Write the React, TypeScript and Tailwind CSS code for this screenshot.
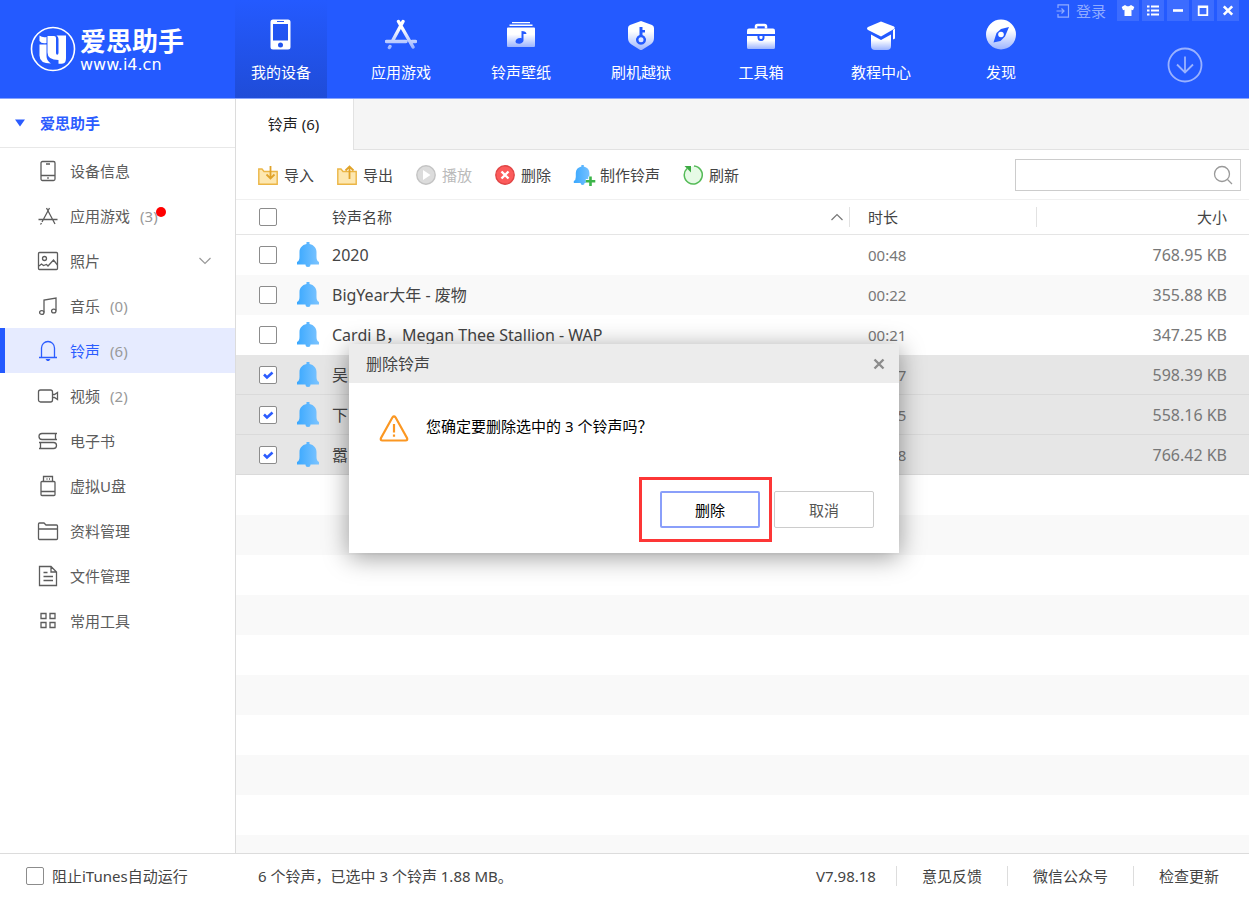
import React, { useState } from 'react';
import clsx from 'clsx';

type IconProps = { className?: string };

/* ---------- header icons ---------- */

const Fade = ({ id }: { id: string }) => (
  <defs>
    <linearGradient id={id} x1="0" y1="0" x2="0" y2="1">
      <stop offset="0.35" stopColor="#fff" />
      <stop offset="1" stopColor="#fff" stopOpacity="0.55" />
    </linearGradient>
  </defs>
);

const PhoneIcon = () => (
  <svg viewBox="0 0 32 32" className="w-8 h-8">
    <path
      fillRule="evenodd"
      fill="#fff"
      d="M8 1.500h15a2.500 2.500 0 0 1 2.500 2.500v25a2.500 2.500 0 0 1-2.500 2.500h-15a2.500 2.500 0 0 1-2.500-2.500v-25a2.500 2.500 0 0 1 2.500-2.500zM8 6v16.500h15V6zM12 3v1h7V3zM15.500 24.500a2.500 2.500 0 1 0 0 5 2.500 2.500 0 0 0 0-5z"
    />
  </svg>
);

const AppsIcon = () => (
  <svg viewBox="0 0 32 32" className="w-8 h-8" fill="none" strokeLinecap="round">
    <defs>
      <linearGradient id="apps" gradientUnits="userSpaceOnUse" x1="0" y1="2" x2="0" y2="30">
        <stop offset="0.3" stopColor="#fff" />
        <stop offset="1" stopColor="#fff" stopOpacity="0.55" />
      </linearGradient>
    </defs>
    <g stroke="url(#apps)" strokeWidth="3.400">
      <path d="M18 3.500L8 22M13.500 3.500l14.500 25.500M1.500 23.500h19.500M27 23.500h3.500M5 28.500l-.6 1" />
    </g>
  </svg>
);

const RingWallIcon = () => (
  <svg viewBox="0 0 32 32" className="w-8 h-8">
    <Fade id="wall" />
    <path fill="#fff" d="M7 4h18v1.300H7zM4.500 6.500h23v1.500h-23z" />
    <path
      fillRule="evenodd"
      fill="url(#wall)"
      d="M3 9.500h26a1 1 0 0 1 1 1V28a1 1 0 0 1-1 1H3a1 1 0 0 1-1-1V10.500a1 1 0 0 1 1-1zM16.500 13v7.200c-3-.8-6 1-6 3.300 0 3.200 8 3.200 8-1.500v-6h3c0-2-2-3-5-3z"
    />
  </svg>
);

const ShieldKeyIcon = () => (
  <svg viewBox="0 0 32 32" className="w-8 h-8">
    <Fade id="shield" />
    <path
      fillRule="evenodd"
      fill="url(#shield)"
      d="M16 3l11 4q2 .8 2 3v10q0 4-3.500 6.500L16 32.500 6.500 26.500Q3 24 3 20V10q0-2.200 2-3zM14.500 9v8a5 5 0 1 0 3 0v-2.500h2.500v-2.500h-2.500V9z"
    />
    <circle cx="16" cy="21.700" r="2.500" fill="#dfe6ff" />
  </svg>
);

const ToolboxIcon = () => (
  <svg viewBox="0 0 32 32" className="w-8 h-8">
    <Fade id="toolbox" />
    <path fill="none" stroke="#fff" strokeWidth="2.500" d="M11 10.500V8.500q0-1.500 1.500-1.500h7q1.500 0 1.500 1.500v2" />
    <path fill="#fff" d="M4 10.500h24q2 0 2 2v3.500H2v-3.500q0-2 2-2z" />
    <path
      fillRule="evenodd"
      fill="url(#toolbox)"
      d="M2 18h10.500v1.500a3.500 3.500 0 0 0 7 0V18H30v11.500q0 1.500-1.500 1.500h-25Q2 31 2 29.500z"
    />
    <path fill="#fff" d="M14.500 18h3v1.500a1.500 1.500 0 0 1-3 0z" />
  </svg>
);

const CapIcon = () => (
  <svg viewBox="0 0 32 32" className="w-8 h-8">
    <Fade id="cap" />
    <path fill="#fff" d="M16 3.500l13 5q1.500 1 0 2.500L16 18.500 3 12Q1 10.500 3 9z" />
    <path fill="url(#cap)" d="M6 16.500l10 5.500 10-5.500v11.500q0 4-4 4H10q-4 0-4-4z" />
    <path fill="#fff" d="M28 12l2-1.500V20.500l-2 1z" />
  </svg>
);

const CompassIcon = () => (
  <svg viewBox="0 0 32 32" className="w-8 h-8">
    <Fade id="compass" />
    <path
      fillRule="evenodd"
      fill="url(#compass)"
      d="M16 1.500a15 15 0 1 0 0 30 15 15 0 0 0 0-30zM24 9l-4 9.500-4.500 4.500-7 1.500 3-9.500 4.500-4z"
    />
    <circle cx="16" cy="16.500" r="2.800" fill="#fff" />
  </svg>
);

const LogoMark = () => (
  <svg viewBox="0 0 46 46" className="w-[46px] h-[46px]" fill="#fff">
    <circle cx="23" cy="23" r="21.500" fill="none" stroke="#fff" strokeWidth="1.600" />
    <path d="M9.500 9.500q3 2.500 7 1.500v6q-5 1-7-2z" />
    <path d="M9.500 18.500h7V30q0 5 4.500 7.500-11.500 0-11.500-8z" />
    <path d="M17.500 10h6.500q2 0 2 2v15q0 1.800 1.200 1.800t1.300-1.800V13q0-2.500-2-3.500h9.500V32q0 5-3 5.500-2 .5-4.500.3V34q-11 0-11-7.500z" />
  </svg>
);

const DownIcon = () => (
  <svg viewBox="0 0 36 36" className="w-9 h-9" fill="none" stroke="#9ab2ff" strokeWidth="1.800">
    <circle cx="18" cy="18" r="16.500" />
    <path d="M18 9.500v16M10 17.500l8 8 8-8" />
  </svg>
);

const LoginIcon = () => (
  <svg viewBox="0 0 14 14" className="w-3.5 h-3.5" fill="none" stroke="currentColor" strokeWidth="1.200">
    <path d="M2 4V.8h10.500v12.400H2V10M.5 7H8M5.500 4.500L8 7 5.500 9.500" />
  </svg>
);

/* ---------- sidebar icons ---------- */

const Line = ({ children }: { children: React.ReactNode }) => (
  <svg viewBox="0 0 22 22" className="w-[22px] h-[22px] shrink-0" fill="none" stroke="currentColor" strokeWidth="1.300">
    {children}
  </svg>
);

const sideIcons = {
  device: (
    <Line>
      <rect x="4" y="1.500" width="14" height="19" rx="1.500" />
      <path d="M4 15.500h14M9 4h4M10.200 18h1.600" />
    </Line>
  ),
  apps: (
    <Line>
      <path d="M12.500 3L5 17M9.500 3l8.500 16M1.500 14.500h19M4.500 18L3.500 19.500" />
    </Line>
  ),
  photo: (
    <Line>
      <rect x="1.500" y="2.500" width="19" height="17" rx="1" />
      <circle cx="7.500" cy="8.500" r="2" />
      <path d="M2 16l2.500-2 2 1.500 3-1 1.500 1.500 5.500-6 4 5" />
    </Line>
  ),
  music: (
    <Line>
      <path d="M7 17.500V5l12-2v12.500" />
      <ellipse cx="4.800" cy="17.500" rx="2.200" ry="1.900" />
      <ellipse cx="16.800" cy="16" rx="2.200" ry="1.900" />
    </Line>
  ),
  bell: (
    <Line>
      <path d="M2 17.500h18M4.500 17.500V8a6.500 6.500 0 0 1 13 0v9.500" />
      <path d="M8.500 19h5l-1.500 2h-2z" fill="currentColor" stroke="none" />
    </Line>
  ),
  video: (
    <Line>
      <rect x="1.500" y="5" width="14" height="12" rx="2" />
      <path d="M16 9.500h1.500l3-2v7l-3-2H16" />
    </Line>
  ),
  book: (
    <Line>
      <path d="M20 3.500H5a3 3 0 0 0 0 6h15M18.500 3.500v6M2 12.500h14.500a3 3 0 0 1 0 6H2M3.500 12.500v6" />
    </Line>
  ),
  usb: (
    <Line>
      <rect x="4" y="6.500" width="14" height="14" rx="1" />
      <path d="M6.500 6.500v-5h9v5M4 16.500h14M9.500 4h1M12 4h1" />
    </Line>
  ),
  folder: (
    <Line>
      <path d="M1.500 18.500V4q0-1 1-1h4.500l2 2H19.500q1 0 1 1v12.500q0 1-1 1h-17q-1 0-1-1zM1.500 9h19" />
    </Line>
  ),
  file: (
    <Line>
      <path d="M2.500 1.500h11.500l5.500 5.500v13.500h-17zM14 1.500V7h5.500M6.500 7.500h4M6.500 11.500h9.500M6.500 15.500h9.500" />
    </Line>
  ),
  grid: (
    <Line>
      <path d="M4 3.500h5v5H4zM13 3.500h5v5h-5zM4 12.500h5v5H4zM13 12.500h5v5h-5z" />
    </Line>
  ),
};

/* ---------- toolbar and list icons ---------- */

const FolderArrow = ({ up }: { up?: boolean }) => (
  <svg viewBox="0 0 20 20" className="w-5 h-5">
    <path d="M.8 19.200V4H4l2 2.500h13.200v12.700z" fill="#fde7b0" stroke="#ebb545" strokeWidth="1.400" />
    <path
      d={up ? 'M12.500 14V2M8.500 5.500l4-4 4 4' : 'M12.500 1v12M8.500 9.500l4 4 4-4'}
      fill="none"
      stroke="#e0a32a"
      strokeWidth="1.800"
    />
  </svg>
);

const PlayIcon = () => (
  <svg viewBox="0 0 20 20" className="w-5 h-5">
    <circle cx="10" cy="10" r="9.200" fill="#dcdcdc" stroke="#c3c3c3" strokeWidth="1.400" />
    <path d="M7 5l7.500 5L7 15z" fill="#fff" />
  </svg>
);

const DeleteIcon = () => (
  <svg viewBox="0 0 20 20" className="w-5 h-5">
    <circle cx="10" cy="10" r="9.200" fill="#fc5b5b" stroke="#e04545" strokeWidth="1.400" />
    <path d="M6.500 6.500l7 7M13.500 6.500l-7 7" stroke="#fff" strokeWidth="2.400" />
  </svg>
);

const BELL = 'M10.500 0h3v2C18 3 20.500 6 20.500 10v5q0 4 2.500 5v2.500h-8.500Q14.500 25 12 25t-2.500-2.500H1V20q2.500-1 2.500-5v-5c0-4 2.500-7 7-8z';

const MakeRingIcon = () => (
  <svg viewBox="0 0 20 20" className="w-5 h-5 overflow-visible">
    <g transform="translate(-1) scale(.8)">
      <path d={BELL} fill="url(#bellFill)" />
    </g>
    <path d="M16.500 11.500v9.500M11.800 16.200h9.500" stroke="#fff" strokeWidth="4.500" />
    <path d="M16.500 11.500v9.500M11.800 16.200h9.500" stroke="#3cb54a" strokeWidth="2.600" />
  </svg>
);

const RefreshIcon = () => (
  <svg viewBox="0 0 20 20" className="w-5 h-5">
    <path d="M11 1a9 9 0 1 1-7 2.500" fill="#e6fae6" stroke="#55bb58" strokeWidth="1.500" />
    <path d="M1.500 1H8v6.500z" fill="#3cab43" />
  </svg>
);

const BellIcon = ({ className }: IconProps) => (
  <svg viewBox="0 0 24 25" className={className}>
    <defs>
      <linearGradient id="bellFill" x1="0" y1="0" x2="1" y2="0">
        <stop offset="0" stopColor="#3aa8ff" />
        <stop offset="1" stopColor="#7cc4ff" />
      </linearGradient>
    </defs>
    <path d={BELL} fill="url(#bellFill)" />
  </svg>
);

type CheckProps = { id?: string; label?: string; checked: boolean; onChange: () => void };

const Check = ({ id, label, checked, onChange }: CheckProps) => (
  <span className="inline-grid w-[18px] h-[18px] align-middle">
    <input
      id={id}
      type="checkbox"
      aria-label={label}
      checked={checked}
      onChange={onChange}
      className="peer col-start-1 row-start-1 w-[18px] h-[18px] appearance-none rounded-[2px] border border-[#8c8c8c] bg-white"
    />
    <svg
      viewBox="0 0 18 18"
      className="hidden peer-checked:block col-start-1 row-start-1 w-[18px] h-[18px] pointer-events-none"
    >
      <path d="M5 8.500l3 3 5.500-5" fill="none" stroke="#2b5cff" strokeWidth="2.600" />
    </svg>
  </span>
);

/* ---------- data ---------- */

const topNav = [
  { label: '我的设备', icon: <PhoneIcon /> },
  { label: '应用游戏', icon: <AppsIcon /> },
  { label: '铃声壁纸', icon: <RingWallIcon /> },
  { label: '刷机越狱', icon: <ShieldKeyIcon /> },
  { label: '工具箱', icon: <ToolboxIcon /> },
  { label: '教程中心', icon: <CapIcon /> },
  { label: '发现', icon: <CompassIcon /> },
];

const sideNav = [
  { label: '设备信息', icon: sideIcons.device },
  { label: '应用游戏', icon: sideIcons.apps, count: 3, dot: true },
  { label: '照片', icon: sideIcons.photo, expandable: true },
  { label: '音乐', icon: sideIcons.music, count: 0 },
  { label: '铃声', icon: sideIcons.bell, count: 6 },
  { label: '视频', icon: sideIcons.video, count: 2 },
  { label: '电子书', icon: sideIcons.book },
  { label: '虚拟U盘', icon: sideIcons.usb },
  { label: '资料管理', icon: sideIcons.folder },
  { label: '文件管理', icon: sideIcons.file },
  { label: '常用工具', icon: sideIcons.grid },
];

const tools = [
  { label: '导入', icon: <FolderArrow /> },
  { label: '导出', icon: <FolderArrow up /> },
  { label: '播放', icon: <PlayIcon />, disabled: true },
  { label: '删除', icon: <DeleteIcon /> },
  { label: '制作铃声', icon: <MakeRingIcon /> },
  { label: '刷新', icon: <RefreshIcon /> },
];

const ringtones = [
  { name: '2020', time: '00:48', size: '768.95 KB' },
  { name: 'BigYear大年 - 废物', time: '00:22', size: '355.88 KB' },
  { name: 'Cardi B，Megan Thee Stallion - WAP', time: '00:21', size: '347.25 KB' },
  { name: '吴昕', time: '00:37', size: '598.39 KB' },
  { name: '下山', time: '00:35', size: '558.16 KB' },
  { name: '嚣张', time: '00:48', size: '766.42 KB' },
];

const winButtons = [
  { label: '皮肤', icon: <path d="M5 2l2 1.200h2L11 2l3.300 2L13 7.300l-1.500-.5V13h-7V6.800L3 7.300 1.700 4z" fill="#fff" /> },
  { label: '菜单', icon: <path d="M2 3.500h2.500M6 3.500h8M2 7.500h2.500M6 7.500h8M2 11.500h2.500M6 11.500h8" stroke="#fff" strokeWidth="2.200" /> },
  { label: '最小化', icon: <path d="M3 7.500h10" stroke="#fff" strokeWidth="2.600" /> },
  { label: '最大化', icon: <path d="M3.700 3.500h8.600v8.600H3.700zM3 4.200h10" fill="none" stroke="#fff" strokeWidth="1.800" /> },
  { label: '关闭', icon: <path d="M3.800 3.300l8.400 8.400M12.200 3.300l-8.400 8.400" stroke="#fff" strokeWidth="2.600" /> },
];

/* ---------- sections ---------- */

const Header = () => (
  <header className="flex h-[99px] shrink-0 border-b border-[#86a3ff] bg-[#245aff] text-white">
    <a href="#home" className="flex w-[235px] shrink-0 items-center gap-1 pl-[30px]">
      <LogoMark />
      <span className="flex flex-col">
        <span className="text-[26px] leading-8 font-bold whitespace-nowrap">爱思助手</span>
        <span className="font-['DejaVu_Sans'] text-[16px] leading-4">www.i4.cn</span>
      </span>
    </a>
    <nav className="flex gap-7">
      {topNav.map((item, i) => (
        <a
          key={item.label}
          href={`#top-${i}`}
          className={clsx(
            'flex w-[92px] flex-col items-center gap-2.5 pt-[18px] leading-6',
            i === 0 && 'bg-linear-to-b from-[#245aff] to-[#1f4cd8]'
          )}
        >
          {item.icon}
          {item.label}
        </a>
      ))}
    </nav>
    <div className="ml-auto flex flex-col items-end pr-2.5">
      <div className="flex gap-[3px]">
        <button className="mr-2 flex h-[21px] items-center gap-1.5 text-[#8fabff]">
          <LoginIcon />
          登录
        </button>
        {winButtons.map((b) => (
          <button key={b.label} aria-label={b.label} className="grid h-[21px] w-[22px] place-items-center bg-[#3c6cff]">
            <svg viewBox="0 0 16 16" className="w-4 h-4">
              {b.icon}
            </svg>
          </button>
        ))}
      </div>
      <button aria-label="下载" className="mt-[26px] mr-9">
        <DownIcon />
      </button>
    </div>
  </header>
);

const Sidebar = () => (
  <aside className="w-[236px] shrink-0 border-r border-[#dcdcdc] bg-white">
    <button className="flex h-[49px] w-full items-center gap-[15px] border-b border-[#e8e8e8] pl-[15px] font-bold text-[#2b5cff]">
      <svg viewBox="0 0 10 8" className="h-2 w-2.5">
        <path d="M0 .5h10L5 7.500z" fill="#2b5cff" />
      </svg>
      爱思助手
    </button>
    <nav>
      {sideNav.map((item, i) => {
        const active = i === 4;
        return (
          <a
            key={item.label}
            href={`#side-${i}`}
            className={clsx(
              'flex h-[45px] items-center border-l-[5px] pr-6 pl-8',
              active ? 'border-[#245aff] bg-[#e6ebff] text-[#2b5cff]' : 'border-transparent text-[#5c5c5c]'
            )}
          >
            {item.icon}
            <span className="ml-[11px]">{item.label}</span>
            {item.count !== undefined && <span className="ml-2.5 text-[#999]">({item.count})</span>}
            {item.dot && <i className="-ml-0.5 mb-2 h-2.5 w-2.5 rounded-full bg-[#ff0000]" />}
            {item.expandable && (
              <svg viewBox="0 0 12 8" className="ml-auto h-2 w-3" fill="none" stroke="#999" strokeWidth="1.200">
                <path d="M.5 1L6 6.500 11.500 1" />
              </svg>
            )}
          </a>
        );
      })}
    </nav>
  </aside>
);

const DeleteDialog = ({ count, onClose }: { count: number; onClose: () => void }) => (
  <div className="absolute inset-0 flex items-center justify-center pr-px pb-px">
    <div
      role="dialog"
      aria-label="删除铃声"
      className="w-[550px] bg-white text-black shadow-[0_4px_24px_rgba(0,0,0,0.4)]"
    >
      <div className="flex h-[39px] items-center justify-between bg-[#ececec] pr-3.5 pl-[17px] text-[16px] text-[#444]">
        删除铃声
        <button aria-label="关闭" onClick={onClose}>
          <svg viewBox="0 0 12 12" className="h-3 w-3">
            <path d="M1.500 1.500l9 9M10.500 1.500l-9 9" stroke="#8c8c8c" strokeWidth="2.400" />
          </svg>
        </button>
      </div>
      <div className="flex h-[94px] items-start gap-[17px] pt-8 pl-[30px]">
        <svg viewBox="0 0 30 27" className="h-[27px] w-[30px]" fill="none" stroke="#fb9722">
          <path d="M13.500 2.300q1.500-2 3 0L28 23q1 2.500-1.500 2.500h-23Q1 25.500 2 23z" strokeWidth="2.200" />
          <path d="M15 9v8.500M15 19.500v2.200" strokeWidth="2.200" />
        </svg>
        <p className="leading-[22px]">您确定要删除选中的 {count} 个铃声吗？</p>
      </div>
      <div className="flex items-center justify-end gap-0.5 pr-[25px] pb-[11px]">
        <div className="border-[3px] border-[#fd3636] py-[11px] pr-[9px] pl-[18px]">
          <button onClick={onClose} className="h-[37px] w-[100px] rounded-[2px] border-2 border-[#8a9ffa]">
            删除
          </button>
        </div>
        <button onClick={onClose} className="h-[37px] w-[100px] rounded-[2px] border border-[#ccc] text-[#555]">
          取消
        </button>
      </div>
    </div>
  </div>
);

export default function App() {
  const [selected, setSelected] = useState<number[]>([3, 4, 5]);
  const [blockItunes, setBlockItunes] = useState(false);
  const [dialogOpen, setDialogOpen] = useState(true);

  const toggle = (i: number) =>
    setSelected(selected.includes(i) ? selected.filter((n) => n !== i) : [...selected, i]);

  const allSelected = selected.length === ringtones.length;
  const toggleAll = () => setSelected(allSelected ? [] : ringtones.map((_, i) => i));

  return (
    <div className="relative flex min-h-screen flex-col bg-white font-['Noto_Sans','Noto_Sans_CJK_SC',sans-serif] text-[15px] leading-5 text-[#444]">
      <Header />

      <div className="flex flex-1">
        <Sidebar />

        <main className="flex min-w-0 flex-1 flex-col">
          <div className="flex h-[51px] bg-[#f5f5f5]">
            <button className="w-[118px] border-r border-[#e2e2e2] bg-white pr-0.5 pb-0.5 text-[#222]">铃声 (6)</button>
            <div className="flex-1 border-b border-[#e2e2e2]" />
          </div>

          <div className="flex h-[50px] items-center gap-[23px] border-b border-[#f0f0f0] pr-2 pl-[22px]">
            {tools.map((t) => (
              <button
                key={t.label}
                disabled={t.disabled}
                onClick={() => t.label === '删除' && setDialogOpen(true)}
                className="flex items-center gap-1.5 whitespace-nowrap disabled:text-[#bbb]"
              >
                {t.icon}
                {t.label}
              </button>
            ))}
            <label className="ml-auto flex h-8 w-[226px] items-center border border-[#ccc] pr-[7px] pl-2">
              <input type="text" aria-label="搜索" className="min-w-0 flex-1 outline-none" />
              <svg viewBox="0 0 20 20" className="h-5 w-5" fill="none" stroke="#999" strokeWidth="1.300">
                <circle cx="9" cy="9" r="7.500" />
                <path d="M14.500 14.500l4.500 4.500" />
              </svg>
            </label>
          </div>

          {/* stripes go on below the last row */}
          <div className="flex-1 bg-[linear-gradient(#fff_50%,#f9f9f9_50%)] bg-[size:100%_80px] bg-[position:0_35px]">
            <table className="w-full table-fixed border-separate border-spacing-0">
              <colgroup>
                <col className="w-[60px]" />
                <col className="w-9" />
                <col />
                <col className="w-[187px]" />
                <col className="w-[212px]" />
              </colgroup>
              <thead className="bg-white">
                <tr className="h-[35px] [&>th]:border-b [&>th]:border-[#e5e5e5] [&>th]:font-normal">
                  <th className="p-0 pl-[23px] text-left leading-none">
                    <Check label="全选" checked={allSelected} onChange={toggleAll} />
                  </th>
                  <th className="p-0" />
                  <th className="p-0 text-left">
                    <div className="flex h-5 items-center justify-between border-r border-[#e2e2e2] pr-1.5">
                      铃声名称
                      <svg viewBox="0 0 12 8" className="h-2 w-3" fill="none" stroke="#777" strokeWidth="1.200">
                        <path d="M.5 7L6 1.500 11.500 7" />
                      </svg>
                    </div>
                  </th>
                  <th className="p-0 text-left">
                    <div className="h-5 border-r border-[#e2e2e2] pl-[18px]">时长</div>
                  </th>
                  <th className="p-0 pr-[22px] text-right">大小</th>
                </tr>
              </thead>
              <tbody>
                {ringtones.map((r, i) => (
                  <tr
                    key={r.name}
                    className={clsx(
                      'h-10 [&>td]:border-b',
                      selected.includes(i) ? 'bg-[#e6e6e6] [&>td]:border-[#dadada]' : '[&>td]:border-transparent'
                    )}
                  >
                    <td className="p-0 pl-[23px] leading-none">
                      <Check label={r.name} checked={selected.includes(i)} onChange={() => toggle(i)} />
                    </td>
                    <td className="p-0">
                      <BellIcon className="h-[25px] w-6" />
                    </td>
                    <td className="truncate p-0 text-[16px]">{r.name}</td>
                    <td className="p-0 pl-[18px] text-[#777]">{r.time}</td>
                    <td className="p-0 pr-[22px] text-right text-[16px] text-[#777]">{r.size}</td>
                  </tr>
                ))}
              </tbody>
            </table>
          </div>
        </main>
      </div>

      <footer className="flex h-[45px] shrink-0 items-center border-t border-[#dcdcdc] bg-white">
        <div className="flex w-[236px] items-center gap-2 pl-[26px]">
          <Check id="block-itunes" checked={blockItunes} onChange={() => setBlockItunes(!blockItunes)} />
          <label htmlFor="block-itunes">阻止iTunes自动运行</label>
        </div>
        <p className="pl-[22px]">
          6 个铃声，已选中 {selected.length} 个铃声 1.88 MB。
        </p>
        <div className="ml-auto flex pr-[5px]">
          <span className="pr-5">V7.98.18</span>
          {['意见反馈', '微信公众号', '检查更新'].map((text) => (
            <a key={text} href={`#${text}`} className="border-l border-[#ddd] px-[25px]">
              {text}
            </a>
          ))}
        </div>
      </footer>

      {dialogOpen && <DeleteDialog count={selected.length} onClose={() => setDialogOpen(false)} />}
    </div>
  );
}
